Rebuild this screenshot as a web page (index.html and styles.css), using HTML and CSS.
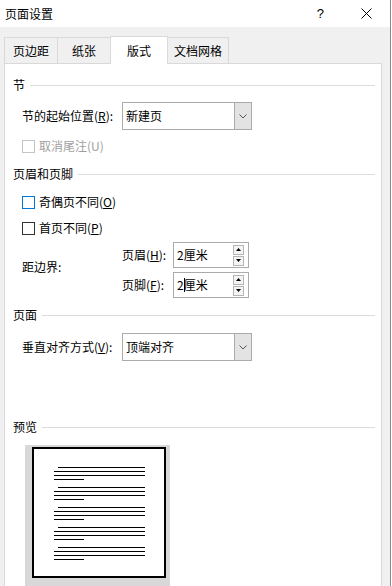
FILE: index.html
```html
<!DOCTYPE html>
<html lang="zh-CN">
<head>
<meta charset="utf-8">
<title>页面设置</title>
<link rel="stylesheet" href="styles.css">
</head>
<body>
<div class="dialog">
  <div class="titlebar">
    <span class="title">页面设置</span>
    <span class="help">?</span>
    <span class="close"><svg width="11" height="11" viewBox="0 0 11 11"><path d="M0.5 0.5 L10.5 10.5 M10.5 0.5 L0.5 10.5" stroke="#000" stroke-width="1" fill="none"/></svg></span>
  </div>
  <div class="tabs">
    <div class="tab t1">页边距</div>
    <div class="tab t2">纸张</div>
    <div class="tab active t3">版式</div>
    <div class="tab t4">文档网格</div>
  </div>
  <div class="panel">
    <div class="heading h1">节</div>
    <div class="row row-select r1">
      <span class="label">节的起始位置(<u>R</u>):</span>
      <div class="select">
        <span class="select-text">新建页</span>
        <span class="select-btn"><svg width="8" height="5" viewBox="0 0 8 5"><path d="M0.5 0.5 L4 4 L7.5 0.5" stroke="#555" stroke-width="1" fill="none"/></svg></span>
      </div>
    </div>
    <div class="row check disabled r2"><span class="box"></span><span>取消尾注(U)</span></div>

    <div class="heading h2">页眉和页脚</div>
    <div class="row check r3"><span class="box focus"></span><span>奇偶页不同(<u>O</u>)</span></div>
    <div class="row check r4"><span class="box"></span><span>首页不同(<u>P</u>)</span></div>
    <div class="margins">
      <span class="m-label">距边界:</span>
      <span class="s-label l1">页眉(<u>H</u>):</span>
      <div class="spinner s1">
        <span class="spin-text">2厘米</span>
        <span class="spin-btns">
          <span class="spin-btn"><svg width="5" height="3" viewBox="0 0 5 3"><path d="M2.5 0 L5 3 L0 3 Z" fill="#000"/></svg></span>
          <span class="spin-btn"><svg width="5" height="3" viewBox="0 0 5 3"><path d="M0 0 L5 0 L2.5 3 Z" fill="#000"/></svg></span>
        </span>
      </div>
      <span class="s-label l2">页脚(<u>F</u>):</span>
      <div class="spinner s2">
        <span class="spin-text">2<span class="caret"></span>厘米</span>
        <span class="spin-btns">
          <span class="spin-btn"><svg width="5" height="3" viewBox="0 0 5 3"><path d="M2.5 0 L5 3 L0 3 Z" fill="#000"/></svg></span>
          <span class="spin-btn"><svg width="5" height="3" viewBox="0 0 5 3"><path d="M0 0 L5 0 L2.5 3 Z" fill="#000"/></svg></span>
        </span>
      </div>
    </div>

    <div class="heading h3">页面</div>
    <div class="row row-select r5">
      <span class="label">垂直对齐方式(<u>V</u>):</span>
      <div class="select">
        <span class="select-text">顶端对齐</span>
        <span class="select-btn"><svg width="8" height="5" viewBox="0 0 8 5"><path d="M0.5 0.5 L4 4 L7.5 0.5" stroke="#555" stroke-width="1" fill="none"/></svg></span>
      </div>
    </div>

    <div class="heading h4">预览</div>
    <div class="preview">
      <div class="page">
        <div class="para"><div class="ln first"></div><div class="ln"></div><div class="ln"></div><div class="ln last"></div></div>
        <div class="para"><div class="ln first"></div><div class="ln"></div><div class="ln"></div><div class="ln last"></div></div>
        <div class="para"><div class="ln first"></div><div class="ln"></div><div class="ln"></div><div class="ln last"></div></div>
        <div class="para"><div class="ln first"></div><div class="ln"></div><div class="ln"></div><div class="ln last"></div></div>
        <div class="para"><div class="ln first"></div><div class="ln"></div><div class="ln"></div><div class="ln last"></div></div>
      </div>
    </div>
  </div>
</div>
</body>
</html>
```

FILE: styles.css
```css
* { box-sizing: border-box; }
html, body { margin: 0; padding: 0; }
body {
  width: 392px;
  height: 586px;
  overflow: hidden;
  background: #ffffff;
  font-family: "Noto Sans CJK SC", "Noto Sans", sans-serif;
  font-size: 12px;
  line-height: 14px;
  color: #000;
}
u { text-decoration: underline; text-underline-offset: 1px; }

.dialog {
  width: 391px;
  height: 586px;
  background: #f0f0f0;
  border-right: 1px solid #8a8a8a;
  display: flex;
  flex-direction: column;
}

.titlebar {
  height: 27px;
  flex: none;
  background: #ffffff;
  display: flex;
  align-items: center;
  padding-left: 5px;
}
.title { font-size: 12px; }
.help { margin-left: auto; font-family: "Liberation Sans", sans-serif; font-size: 13px; }
.close { margin-left: 37px; margin-right: 18px; display: flex; align-items: center; }

.tabs {
  height: 36px;
  flex: none;
  display: flex;
  align-items: flex-end;
  padding-left: 4px;
}
.tab {
  height: 26px;
  border: 1px solid #d9d9d9;
  border-bottom: none;
  background: #f0f0f0;
  display: flex;
  align-items: center;
  justify-content: center;
  margin-right: -1px;
  padding-top: 1px;
}
.t1 { width: 54px; }
.t2 { width: 54px; }
.t3 { width: 58px; }
.t4 { width: 62px; }
.tab.active {
  height: 28px;
  background: #ffffff;
  margin-bottom: -1px;
  position: relative;
  z-index: 1;
  padding-top: 0;
}

.panel {
  flex: 1;
  margin-left: 4px;
  width: 378px;
  background: #ffffff;
  border: 1px solid #d9d9d9;
  border-bottom: none;
  padding: 0 6px 0 8px;
  display: flex;
  flex-direction: column;
}

.heading {
  height: 14px;
  display: flex;
  align-items: center;
  white-space: nowrap;
}
.heading::after {
  content: "";
  flex: 1;
  height: 1px;
  background: #dcdcdc;
  margin-left: 5px;
}
.h1 { margin-top: 14px; }
.h2 { margin-top: 14px; }
.h3 { margin-top: 10px; }
.h4 { margin-top: 59px; }

.row {
  display: flex;
  align-items: center;
  padding-left: 9px;
}
.row-select { height: 28px; }
.r1 { margin-top: 10px; }
.r5 { margin-top: 11px; }
.label { width: 100px; flex: none; white-space: nowrap; }

.select {
  width: 130px;
  height: 28px;
  border: 1px solid #ababab;
  display: flex;
  align-items: stretch;
}
.select-text {
  flex: 1;
  padding-left: 3px;
  display: flex;
  align-items: center;
}
.select-btn {
  width: 17px;
  border-left: 1px solid #ababab;
  background: #e3e3e3;
  display: flex;
  align-items: center;
  justify-content: center;
}

.check { height: 14px; }
.box {
  width: 13px;
  height: 13px;
  border: 1px solid #333;
  background: #fff;
  margin-right: 4px;
  flex: none;
}
.box.focus { border-color: #0078d7; }
.disabled { color: #a0a0a0; }
.disabled .box { border-color: #c4c4c4; }
.r2 { margin-top: 9px; }
.r3 { margin-top: 14px; }
.r4 { margin-top: 12px; }

.margins {
  margin-top: 7px;
  padding-left: 9px;
  display: grid;
  grid-template-columns: 100px 51px 76px;
  grid-template-rows: 26px 26px;
  row-gap: 4px;
  align-items: center;
}
.m-label { grid-column: 1; grid-row: 1 / 3; align-self: center; padding-bottom: 6px; }
.l1 { grid-column: 2; grid-row: 1; }
.l2 { grid-column: 2; grid-row: 2; }
.s1 { grid-column: 3; grid-row: 1; }
.s2 { grid-column: 3; grid-row: 2; }

.spinner {
  height: 26px;
  border: 1px solid #ababab;
  display: flex;
  align-items: center;
  padding-right: 4px;
}
.spin-text { flex: 1; padding-left: 3px; display: flex; align-items: center; }
.caret {
  display: inline-block;
  width: 1px;
  height: 14px;
  background: #000;
  margin-right: -1px;
}
.spin-btns {
  display: flex;
  flex-direction: column;
  gap: 1px;
}
.spin-btn {
  width: 11px;
  height: 10px;
  border: 1px solid #b5b5b5;
  background: #f4f4f4;
  display: flex;
  align-items: center;
  justify-content: center;
}

.preview {
  flex: 1;
  margin-top: 11px;
  margin-left: 12px;
  width: 145px;
  background: #d8d8d8;
  padding: 2px 0 0 7px;
}
.page {
  width: 134px;
  height: 131px;
  border: 2px solid #000;
  background: #fff;
  padding: 18px 0 0 20px;
  display: flex;
  flex-direction: column;
  gap: 7px;
}
.para { display: flex; flex-direction: column; gap: 3px; }
.ln { height: 1px; width: 91px; background: #000; }
.ln.first { width: 87px; margin-left: 4px; }
.ln.last { width: 30px; }
```
